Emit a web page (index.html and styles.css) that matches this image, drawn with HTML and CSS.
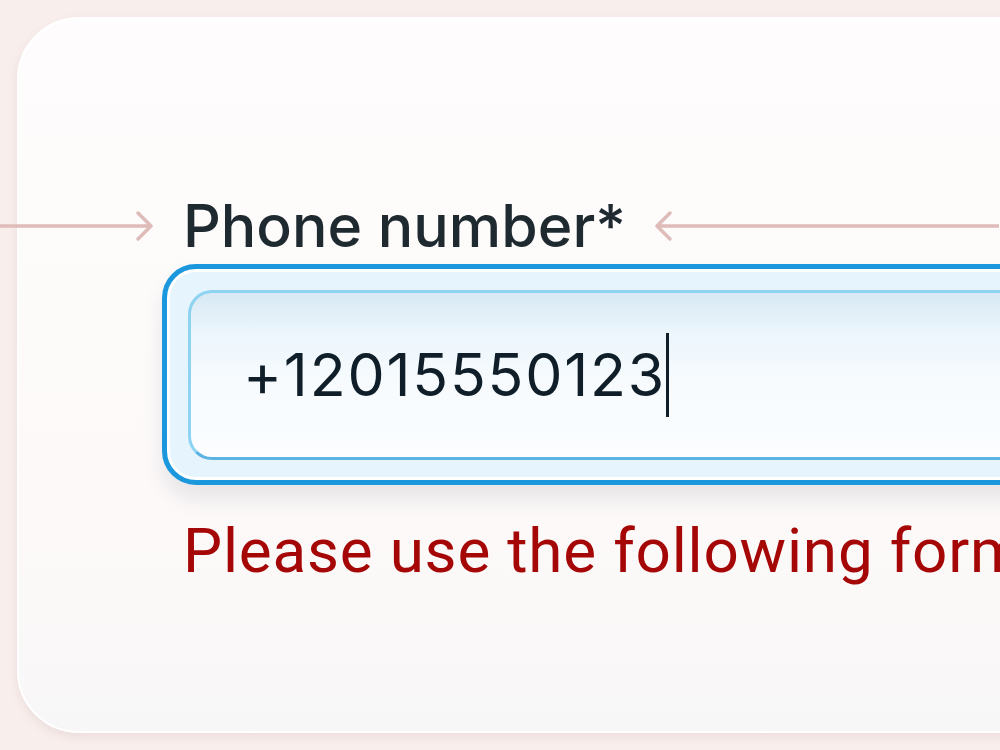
FILE: index.html
```html
<!DOCTYPE html>
<html lang="en">
<head>
<meta charset="utf-8">
<title>Phone number field</title>
<link rel="stylesheet" href="styles.css">
</head>
<body>
<main class="card">
  <div class="label-row">
    <svg class="arrow arrow-in" viewBox="0 0 155 40" preserveAspectRatio="xMaxYMid meet" aria-hidden="true">
      <path d="M0 20 H151 M138 7 L151 20 L138 33" fill="none" stroke="#dfbcb9" stroke-width="3.5" stroke-linecap="round" stroke-linejoin="round"/>
    </svg>
    <label class="label" for="phone">Phone number*</label>
    <svg class="arrow arrow-out" viewBox="0 0 345 40" preserveAspectRatio="xMinYMid meet" aria-hidden="true">
      <path d="M345 20 H3 M16 7 L3 20 L16 33" fill="none" stroke="#dfbcb9" stroke-width="3.5" stroke-linecap="round" stroke-linejoin="round"/>
    </svg>
  </div>
  <div class="field">
    <div class="field-inner">
      <span class="value" id="phone">+12015550123</span><span class="caret"></span>
    </div>
  </div>
  <p class="error">Please use the following format: +1 (201) 555-0123</p>
</main>
</body>
</html>
```
FILE: styles.css
```css
html, body {
  margin: 0;
  padding: 0;
}
body {
  width: 1000px;
  height: 750px;
  overflow: hidden;
  background: #f8eeec;
  font-family: "Inter", "Noto Sans", sans-serif;
}
.card {
  box-sizing: border-box;
  margin: 17px 0 0 17px;
  width: 1100px;
  height: 716px;
  border-radius: 62px;
  background: linear-gradient(180deg, #fefcfc 0%, #fdf9f9 70%, #f8f7f7 100%);
  border: 2px solid #ffffff;
  box-shadow: 0 4px 10px rgba(180, 150, 150, 0.18);
  padding-top: 171px;
  display: flex;
  flex-direction: column;
  align-items: flex-start;
}
.label-row {
  display: flex;
  align-items: center;
  margin-left: -19px;
  width: 1100px;
  gap: 28px;
}
.arrow {
  height: 40px;
  flex: none;
}
.arrow-in {
  width: 155px;
}
.arrow-out {
  width: 345px;
}
.label {
  font-family: "Inter", sans-serif;
  font-size: 59px;
  line-height: 72px;
  font-weight: 500;
  color: #1f2a30;
}
.field {
  box-sizing: border-box;
  margin: 2px 0 0 143px;
  width: 960px;
  height: 221px;
  border-radius: 34px;
  border: 5px solid #1b97dd;
  background: #e6f5fd;
  box-shadow: inset 0 0 0 3px #ffffff, 0 14px 20px rgba(120, 130, 140, 0.16);
  padding: 21px 0 20px 21px;
}
.field-inner {
  box-sizing: border-box;
  height: 100%;
  border-radius: 24px;
  border: 3px solid #8fd3f3;
  border-bottom-color: #5db3e3;
  border-right: none;
  background: linear-gradient(180deg, #d8e9f4 0%, #ecf6fc 25%, #f7fbfe 55%, #fbfdff 100%);
  display: flex;
  align-items: center;
  padding-left: 52px;
}
.value {
  font-family: "Inter", sans-serif;
  font-size: 59px;
  line-height: 72px;
  color: #0f1e28;
  letter-spacing: 1.8px;
}
.caret {
  display: block;
  width: 3px;
  height: 84px;
  background: #0f1e28;
  margin-left: 0;
}
.error {
  margin: 30px 0 0 164px;
  font-family: "Roboto", sans-serif;
  font-size: 62px;
  line-height: 72px;
  font-weight: 400;
  letter-spacing: 0.8px;
  color: #a50606;
  white-space: nowrap;
}
```
